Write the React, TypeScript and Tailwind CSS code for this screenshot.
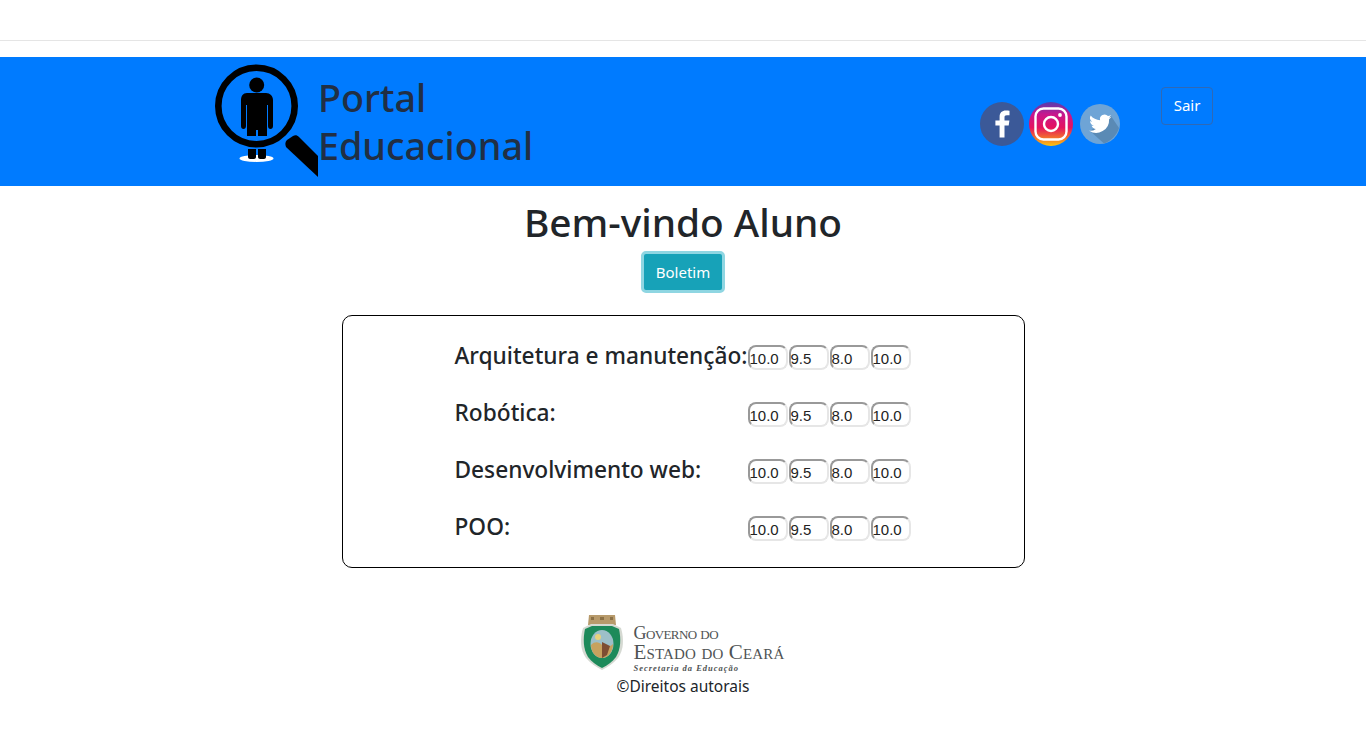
import React from 'react';

const SUBJECTS = ['Arquitetura e manutenção:', 'Robótica:', 'Desenvolvimento web:', 'POO:'];
const GRADES = ['10.0', '9.5', '8.0', '10.0'];

function LogoIcon() {
  return (
    <svg width="104" height="116" viewBox="0 0 104 116" className="block shrink-0">
      <ellipse cx="41.5" cy="95.5" rx="17" ry="3.4" fill="#fff" />
      <circle cx="41.5" cy="43" r="38.2" fill="none" stroke="#000" strokeWidth="6.6" />
      <circle cx="41.7" cy="22" r="7.5" fill="#000" />
      <path d="M32 30h19c4 0 7 3 7 7v26c0 2-1 3-2.500 3S53 65 53 63V42h-1v31h-9v-6h-2v6h-9V42h-1v21c0 2-1 3-2.500 3S26 65 26 63V37c0-4 2-7 6-7z" fill="#000" />
      <path d="M33 86h8v8c0 1-1 2-2 2h-4c-1 0-2-1-2-2zM43 86h8v8c0 1-1 2-2 2h-4c-1 0-2-1-2-2z" fill="#000" />
      <path d="M71 84c-1-3-1-5 1-7l6-4c2-1 4-1 6 1l19 19v21z" fill="#000" />
    </svg>
  );
}

function Facebook() {
  return (
    <svg width="44" height="44" viewBox="0 0 44 44" className="block">
      <circle cx="22" cy="22" r="22" fill="#3b5998" />
      <path d="M24.500 35.500V23.500h4.200l.7-5h-4.900v-3c0-1.400.5-2.300 2.400-2.300h2.600V8.800c-.5-.1-2-.2-3.700-.2-3.700 0-6.200 2.200-6.200 6.300v3.600h-4.200v5h4.200v12z" fill="#fff" />
    </svg>
  );
}

function Instagram() {
  return (
    <svg width="44" height="44" viewBox="0 0 44 44" className="block">
      <defs>
        <linearGradient id="insta" x1="0.5" y1="1" x2="0.5" y2="0">
          <stop offset="0" stopColor="#fdc70c" />
          <stop offset="0.18" stopColor="#f3722c" />
          <stop offset="0.42" stopColor="#e4125f" />
          <stop offset="0.72" stopColor="#c9158d" />
          <stop offset="1" stopColor="#4f3fb0" />
        </linearGradient>
      </defs>
      <circle cx="22" cy="22" r="22" fill="url(#insta)" />
      <rect x="6.500" y="6.500" width="31" height="31" rx="8" fill="none" stroke="#fff" strokeWidth="2.400" />
      <circle cx="22" cy="22" r="7" fill="none" stroke="#fff" strokeWidth="2.400" />
      <circle cx="31" cy="13" r="1.900" fill="#fff" />
    </svg>
  );
}

function Twitter() {
  return (
    <svg width="40" height="40" viewBox="0 0 40 40" className="block">
      <circle cx="20" cy="20" r="20" fill="#6ea4d6" />
      <path d="M31 12L39 24C37 31 31 37 24 39.500L10 27z" fill="#5a8ab5" />
      <path d="M31.500 12.800c-.8.4-1.700.6-2.600.7.9-.6 1.700-1.400 2-2.500-.9.5-1.900.9-2.900 1.100a4.600 4.600 0 0 0-7.900 4.200c-3.800-.2-7.200-2-9.400-4.800a4.600 4.600 0 0 0 1.400 6.100c-.7 0-1.400-.2-2.100-.6 0 2.200 1.600 4.100 3.700 4.600-.7.2-1.400.2-2.100.1.600 1.800 2.300 3.100 4.300 3.200a9.300 9.300 0 0 1-6.800 1.900 13 13 0 0 0 20-11.600c.9-.6 1.700-1.400 2.400-2.400z" fill="#fff" />
    </svg>
  );
}

function Coat() {
  return (
    <svg width="44" height="57" viewBox="0 0 44 57" className="block shrink-0 -ml-[1px]">
      <path d="M9 1h26l1 10H8z" fill="#b79a6b" />
      <path d="M11 3h3v3h-3zM20 3h4v3h-4zM30 3h3v3h-3z" fill="#8a7046" />
      <path d="M3 14l8-4h22l8 4c3 10 3 22-3 30-4 5-10 9-16 12-6-3-12-7-16-12C0 36 0 24 3 14z" fill="#d5d9d2" />
      <path d="M5 15l7-3h20l7 3c2 9 2 20-3 28-4 5-8 8-14 11-6-3-10-6-14-11C3 35 3 24 5 15z" fill="#1d8a5a" />
      <ellipse cx="22" cy="30" rx="11.500" ry="14" fill="#9dbfc8" />
      <path d="M11 31c4-4 8-3 11 0s8 2 11-1c0 8-5 14-11 14s-11-6-11-13z" fill="#c7a25e" />
      <path d="M22 28l8 4-3 9-5 3z" fill="#7d4d32" />
      <circle cx="18" cy="23" r="3" fill="#e9d27b" />
    </svg>
  );
}

export default function App() {
  return (
    <div className="min-h-[750px] bg-white text-[#212529] font-['Noto_Sans','Open_Sans',sans-serif]">
      {/* Top bar */}
      <div className="h-[41px] border-b border-[#e5e5e5]" />

      {/* Header */}
      <header className="mt-4 h-[129px] bg-[#007bff] flex pl-[215px]">
        <div className="pt-[6px]">
          <LogoIcon />
        </div>
        <h1 className="w-[240px] -ml-[1px] pt-[17px] text-[37.700px] leading-[48px] font-medium text-[#212f44]">
          Portal Educacional
        </h1>
        <div className="ml-[422px] pt-[45px] flex items-start gap-[5px]">
          <Facebook />
          <Instagram />
          <div className="pt-[2px] pl-[2px]">
            <Twitter />
          </div>
        </div>
        <div className="ml-[41px] pt-[30px]">
          <button className="w-[52px] h-[38px] pb-[2px] rounded border border-[#2f69b5] text-white text-[15px]">Sair</button>
        </div>
      </header>

      {/* Main */}
      <main className="flex flex-col items-center">
        <h2 className="mt-[11px] text-[38.800px] leading-[50px] font-medium">Bem-vindo Aluno</h2>
        <button className="mt-[4px] w-[84px] h-[42px] rounded-[5px] border-[3px] border-[#8fd6e2] bg-[#17a2b8] text-white text-[15px]">
          Boletim
        </button>

        <section className="mt-[22px] w-[683px] h-[253px] border border-black rounded-[10px] pl-[112px] pt-[27px] flex flex-col gap-[32px]">
          {SUBJECTS.map((s) => (
            <div key={s} className="flex items-start h-[25px]">
              <div className="w-[293px] text-[22.700px] leading-[25px] font-medium whitespace-nowrap">{s}</div>
              <div className="flex gap-[1px] pt-[2px]">
                {GRADES.map((g, i) => (
                  <div
                    key={i}
                    className="w-[40px] h-[25px] rounded-[8px] border-2 border-t-[#999] border-l-[#999] border-r-[#e6e6e6] border-b-[#e6e6e6] text-[15px] leading-[24px] text-[#222] font-['Liberation_Sans',sans-serif]"
                  >
                    {g}
                  </div>
                ))}
              </div>
            </div>
          ))}
        </section>

        {/* Footer */}
        <footer className="mt-[46px] flex flex-col items-center">
          <div className="flex w-[205px] h-[61px] text-[#4f5354] font-['Liberation_Serif',serif]">
            <Coat />
            <div className="ml-[10px] pt-[10px]">
              <div className="text-[18px] leading-[19px] [font-variant:small-caps] whitespace-nowrap tracking-[-0.6px]">Governo do</div>
              <div className="text-[21px] leading-[18px] [font-variant:small-caps] whitespace-nowrap tracking-[0.15px]">Estado do Ceará</div>
              <div className="text-[8.500px] leading-[11px] mt-[2px] italic font-bold whitespace-nowrap tracking-[1px]">Secretaria da Educação</div>
            </div>
          </div>
          <p className="mt-[1px] text-[15.500px] leading-[20px] text-[#212529]">©Direitos autorais</p>
        </footer>
      </main>
    </div>
  );
}
